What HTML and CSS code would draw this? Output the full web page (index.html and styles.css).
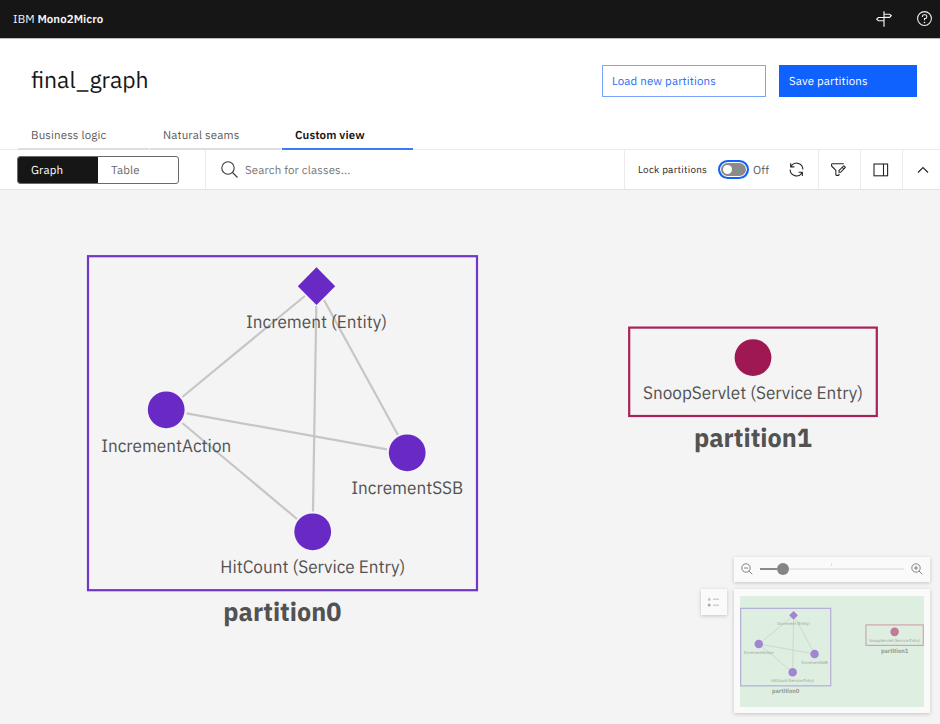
FILE: index.html
```html
<!DOCTYPE html>
<html lang="en">
<head>
<meta charset="utf-8">
<title>IBM Mono2Micro</title>
<link rel="stylesheet" href="styles.css">
</head>
<body>
<div class="app">
  <header class="topbar">
    <div class="brand"><span class="brand-ibm">IBM</span> <strong>Mono2Micro</strong></div>
    <div class="topbar-icons">
      <svg width="16" height="16" viewBox="0 0 16 16" fill="none" stroke="#f4f4f4"><path d="M8 .3v15.4M8 3.2h5.6l1.7 1.5-1.7 1.6H8M8 6.5H2.4L.7 8.1l1.7 1.6H8" stroke-width="1.15"/></svg>
      <svg width="17" height="17" viewBox="0 0 32 32" fill="#f4f4f4"><path d="M16 2A14 14 0 1 0 30 16 14 14 0 0 0 16 2Zm0 26A12 12 0 1 1 28 16 12 12 0 0 1 16 28Z"/><path d="M17 8H15.5A4.49 4.49 0 0 0 11 12.5V13h2v-.5A2.5 2.5 0 0 1 15.5 10H17a2.5 2.5 0 0 1 0 5H15v4.5h2V17a4.5 4.5 0 0 0 0-9Z"/><circle cx="16" cy="23.5" r="1.5"/></svg>
    </div>
  </header>

  <section class="heading">
    <h1>final_graph</h1>
    <div class="actions">
      <button class="btn btn-outline">Load new partitions</button>
      <button class="btn btn-solid">Save partitions</button>
    </div>
  </section>

  <nav class="tabs">
    <a class="tab">Business logic</a>
    <a class="tab">Natural seams</a>
    <a class="tab tab-active">Custom view</a>
  </nav>

  <div class="toolbar">
    <div class="switcher-wrap">
      <div class="switcher"><span class="switch-on">Graph</span><span class="switch-off">Table</span></div>
    </div>
    <div class="search">
      <svg width="17" height="17" viewBox="0 0 17 17" fill="none" stroke="#393939" stroke-width="1.1"><circle cx="7" cy="7" r="6.2"/><path d="M11.5 11.5l5 5"/></svg>
      <span>Search for classes...</span>
    </div>
    <div class="lock">
      <span class="lock-label">Lock partitions</span>
      <span class="toggle"><span class="knob"></span></span>
      <span class="toggle-state">Off</span>
      <svg width="17" height="17" viewBox="0 0 32 32" fill="#262626"><path d="M12 10H6.78A11 11 0 0 1 27 16h2A13 13 0 0 0 6 7.68V4H4v8h8z"/><path d="M20 22h5.22A11 11 0 0 1 5 16H3a13 13 0 0 0 23 8.32V28h2v-8h-8z"/></svg>
    </div>
    <div class="tool">
      <svg width="17" height="17" viewBox="0 0 32 32" fill="#262626"><path d="M26 6H4v3.17l7.41 7.42.59.58V26h4v-2h2v2a2 2 0 0 1-2 2h-4a2 2 0 0 1-2-2v-8l-7.41-7.41A2 2 0 0 1 2 9.17V6a2 2 0 0 1 2-2h22z"/><path d="M29.71 11.29l-3-3a1 1 0 0 0-1.42 0L16 17.59V22h4.41l9.3-9.29a1 1 0 0 0 0-1.42zM19.59 20H18v-1.59l5-5L24.59 15zM26 13.59L24.41 12 26 10.41 27.59 12z"/></svg>
    </div>
    <div class="tool">
      <svg width="16" height="14" viewBox="0 0 16 14" fill="none" stroke="#262626" stroke-width="1.1"><rect x="1" y="1" width="13.6" height="11.8"/><path d="M10.5 1v11.8"/></svg>
    </div>
    <div class="tool tool-last">
      <svg width="12" height="8" viewBox="0 0 12 8" fill="none" stroke="#262626" stroke-width="1.15"><path d="M1 6.5l5-5 5 5"/></svg>
    </div>
  </div>

  <main class="canvas">
    <svg class="graph" width="940" height="534" viewBox="0 190 940 534">
      <g id="graph">
        <g class="box">
          <rect class="violet-line" x="88" y="256.2" width="389" height="334"/>
          <rect class="red-line" x="629.2" y="327.6" width="247.6" height="88.4"/>
        </g>
        <g class="edges">
          <path d="M304.8 296L182.3 397M316.3 306L313 511.5M324 300L398 435M186.5 413.3L387 449.3M182.3 423L297 519"/>
        </g>
        <g class="labels">
          <text x="316.5" y="327.8" textLength="141" lengthAdjust="spacingAndGlyphs">Increment (Entity)</text>
          <text x="166.2" y="451.6" textLength="130" lengthAdjust="spacingAndGlyphs">IncrementAction</text>
          <text x="407.2" y="494.4" textLength="112" lengthAdjust="spacingAndGlyphs">IncrementSSB</text>
          <text x="312.8" y="573.4" textLength="185" lengthAdjust="spacingAndGlyphs">HitCount (Service Entry)</text>
          <text x="753" y="399.2" textLength="220" lengthAdjust="spacingAndGlyphs">SnoopServlet (Service Entry)</text>
        </g>
        <g class="violet">
          <path d="M316.5 267.3L335.2 286.2 316.5 305 297.8 286.2z"/>
          <circle cx="166.2" cy="409.8" r="18.4"/>
          <circle cx="407.2" cy="452.8" r="18.4"/>
          <circle cx="312.7" cy="531.8" r="18.4"/>
        </g>
        <circle class="red" cx="753" cy="357.6" r="18.4"/>
        <g class="titles">
          <text x="282.3" y="620.6" textLength="118" lengthAdjust="spacingAndGlyphs">partition0</text>
          <text x="752.9" y="446.7" textLength="118" lengthAdjust="spacingAndGlyphs">partition1</text>
        </g>
      </g>
    </svg>

    <aside class="overview">
      <button class="legend-btn">
        <svg width="14" height="12" viewBox="0 0 14 12"><path d="M2.2 1.2L4 4.4H.6z" fill="#bdbdbd"/><circle cx="2.2" cy="9" r="1.5" fill="#a8a8a8"/><path d="M6 3.2h6M6 9.2h6" stroke="#bdbdbd"/></svg>
      </button>
      <div class="overview-col">
        <div class="zoombar">
          <svg width="12" height="12" viewBox="0 0 12 12" fill="none" stroke="#777" stroke-width=".9"><circle cx="5" cy="5" r="4.2"/><path d="M8 8l3.3 3.3M3 5h4"/></svg>
          <div class="slider"><span class="slider-fill"></span><span class="thumb"></span><span class="slider-rest"></span></div>
          <svg width="12" height="12" viewBox="0 0 12 12" fill="none" stroke="#777" stroke-width=".9"><circle cx="5" cy="5" r="4.2"/><path d="M8 8l3.3 3.3M3 5h4M5 3v4"/></svg>
        </div>
        <div class="minimap">
          <svg class="mini" width="184" height="111" viewBox="740.5 596 184 111">
            <use href="#graph" transform="translate(720.8 548.9) scale(.2315 .232)"/>
          </svg>
        </div>
      </div>
    </aside>
  </main>
</div>
</body>
</html>
```

FILE: styles.css
```css
* { box-sizing: border-box; }
body {
  margin: 0;
  background: #fff;
  color: #161616;
  font-family: "IBM Plex Sans", Roboto, "Liberation Sans", sans-serif;
  font-size: 11.5px;
  text-rendering: geometricPrecision;
}
svg { display: block; flex: none; }
button { font: inherit; text-rendering: inherit; }
.app { width: 940px; height: 724px; display: flex; flex-direction: column; overflow: hidden; }

.topbar {
  height: 38px;
  flex: none;
  display: flex;
  align-items: center;
  justify-content: space-between;
  padding: 0 7.5px 0 13px;
  background: #161616;
  box-shadow: 0 1px 0 #bcbcbc;
  color: #f4f4f4;
}
.brand { font-size: 11.5px; letter-spacing: .05px; padding-top: 1px; }
.brand strong { font-weight: 600; }
.topbar-icons { display: flex; align-items: center; gap: 24px; padding-bottom: 1px; }

.heading {
  height: 81px;
  flex: none;
  display: flex;
  justify-content: space-between;
  padding: 26px 23px 0 31px;
}
h1 { margin: 0; font-size: 23px; line-height: 32px; font-weight: 400; }
.actions { display: flex; gap: 13px; padding-top: 1px; }
.btn { height: 32px; padding: 0 9px; text-align: left; border: 1px solid #7aa5ff; font-size: 11.5px; letter-spacing: .13px; }
.btn-outline { width: 164px; background: #fff; color: #2b6bf5; }
.btn-solid { width: 138px; background: #0f62fe; border-color: #0f62fe; color: #fff; }

.tabs { height: 31px; flex: none; display: flex; gap: 1px; padding-left: 18px; border-bottom: 1px solid #ebebeb; }
.tab { width: 131px; height: 31px; padding: 0 13px; line-height: 33px; color: #5b5b5b; letter-spacing: .13px; border-bottom: 2px solid #dedede; }
.tab-active { color: #161616; font-weight: 600; border-bottom-color: #3b7bf8; }

.toolbar { height: 40px; flex: none; display: flex; border-bottom: 1px solid #e3e3e3; }
.switcher-wrap { width: 206px; padding: 6px 0 0 17px; border-right: 1px solid #ebebeb; }
.switcher { width: 162px; height: 28px; display: flex; border: 1px solid #6a6a6a; border-radius: 3px; overflow: hidden; line-height: 27px; letter-spacing: .13px; }
.switch-on { width: 80px; padding-left: 13px; background: #161616; color: #fff; }
.switch-off { padding-left: 13px; color: #6a6a6a; }
.search { flex: 1; display: flex; align-items: center; gap: 7px; padding-left: 15px; color: #767676; letter-spacing: .13px; }
.search span { padding-top: 1px; }
.lock { width: 195px; display: flex; align-items: center; padding-left: 13px; border-left: 1px solid #ebebeb; border-right: 1px solid #ebebeb; }
.lock-label { width: 80px; font-size: 9.9px; letter-spacing: .25px; color: #262626; white-space: nowrap; }
.toggle { width: 31px; height: 19px; padding: 3px; background: #8b8b8b; border: 2px solid #0f62fe; border-radius: 10px; box-shadow: inset 0 0 0 1px #fff; }
.knob { display: block; width: 9px; height: 9px; border-radius: 50%; background: #fff; }
.toggle-state { width: 39px; padding: 1px 0 0 4px; color: #5b5b5b; letter-spacing: .13px; }
.tool { width: 42px; display: flex; align-items: center; justify-content: center; border-right: 1px solid #ebebeb; padding-right: 2px; }
.tool-last { width: 37px; border: 0; padding: 0 0 0 2px; }

.canvas { position: relative; height: 534px; flex: none; background: #f4f4f4; }
.graph { --box: 2.2px; --edge: 2.2px; --edge-color: #c6c6c6; --label: #525252; --violet-line: #7135c7; --red-line: #a72258; }
.box { fill: none; stroke-width: var(--box); }
.violet-line { stroke: var(--violet-line); }
.red-line { stroke: var(--red-line); }
.violet { fill: #6929c4; }
.red { fill: #9f1853; }
.labels { fill: var(--label); font-size: 18px; text-anchor: middle; }
.titles { fill: #525252; font-size: 26px; font-weight: 700; text-anchor: middle; }
.edges { fill: none; stroke: var(--edge-color); stroke-width: var(--edge); }

.overview { position: absolute; right: 10px; bottom: 11px; display: flex; gap: 7px; align-items: flex-start; }
.overview-col { width: 196px; display: flex; flex-direction: column; gap: 7px; }
.legend-btn, .zoombar, .minimap { background: #fafafa; box-shadow: 0 1px 4px rgba(0, 0, 0, .2); }
.legend-btn { width: 26px; height: 26px; margin-top: 32px; padding: 0; border: 0; display: flex; align-items: center; justify-content: center; }
.zoombar { height: 25px; display: flex; align-items: center; padding: 0 7px 1px; gap: 7px; }
.slider { flex: 1; display: flex; align-items: center; }
.slider-fill { width: 17px; height: 2px; background: #8a8a8a; }
.thumb { width: 12px; height: 12px; border-radius: 50%; background: #858585; }
.slider-rest { flex: 1; height: 7px; border-bottom: 2px solid #e8e8e8; background: linear-gradient(#e0e0e0, #e0e0e0) 42px 0 / 1px 3px no-repeat; margin-bottom: 5px; }
.minimap { height: 124px; padding: 7px 0 0 6px; }
.mini { --box: 5px; --edge: 4px; --edge-color: #b4c6b6; --label: #525252; --violet-line: #8a70cc; --red-line: #c0607c; background: #deeee0; }
.mini use { opacity: .52; }
```
